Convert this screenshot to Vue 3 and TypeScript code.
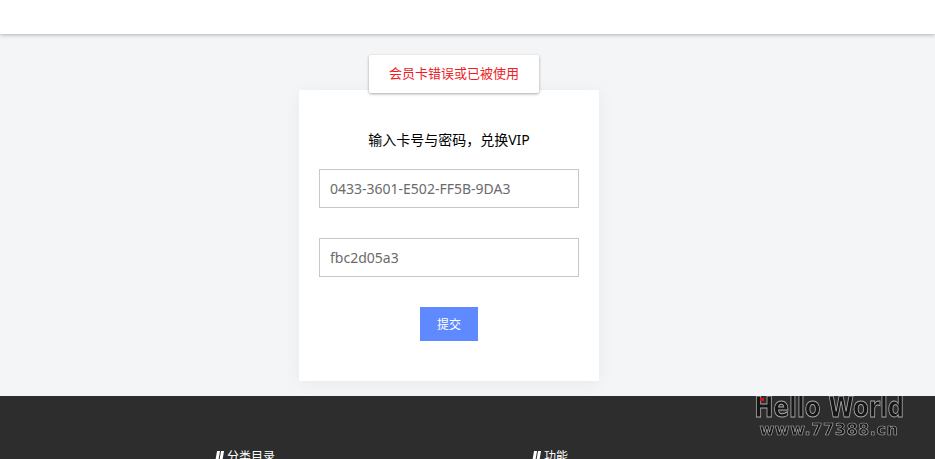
<script setup lang="ts">
const fields: string[] = ['0433-3601-E502-FF5B-9DA3', 'fbc2d05a3']
const columns: { title: string; cls: string }[] = [
  { title: '分类目录', cls: 'col-a' },
  { title: '功能', cls: 'col-b' },
]
</script>

<template>
  <div class="page">
    <header class="topbar"></header>
    <main class="content">
      <div class="toast">会员卡错误或已被使用</div>
      <form class="card" @submit.prevent>
        <h2 class="title">输入卡号与密码，兑换VIP</h2>
        <input v-for="f in fields" :key="f" class="field" type="text" :value="f" />
        <button class="submit" type="submit">提交</button>
      </form>
    </main>
    <footer class="footer">
      <div class="watermark">
        <i class="wm-dot"></i>
        <div class="wm-big">Hello World</div>
        <div class="wm-small">www.77388.cn</div>
      </div>
      <div class="columns">
        <div v-for="c in columns" :key="c.title" :class="['col', c.cls]">
          <span class="slashes"><i></i><i></i></span>
          <span class="col-title">{{ c.title }}</span>
        </div>
      </div>
    </footer>
  </div>
</template>

<style>
html, body { margin: 0; height: 100%; overflow: hidden; background: #f4f5f7; }
</style>

<style scoped>
.page {
  height: 459px;
  overflow: hidden;
  display: flex;
  flex-direction: column;
  font-family: "Noto Sans", "Noto Sans CJK SC", sans-serif;
  background: #f4f5f7;
}
.topbar {
  height: 34px;
  flex: none;
  background: #fff;
  box-shadow: 0 1px 4px rgba(0, 0, 0, 0.28);
  position: relative;
  z-index: 1;
}
.content {
  height: 362px;
  flex: none;
  position: relative;
  padding-top: 56px;
  box-sizing: border-box;
}
.toast {
  position: absolute;
  left: 369px;
  top: 21px;
  width: 170px;
  height: 38px;
  box-sizing: border-box;
  background: #fff;
  border-radius: 2px;
  box-shadow: 0 1px 3px rgba(0, 0, 0, 0.35);
  color: #ee1c25;
  font-size: 13px;
  line-height: 36px;
  text-align: center;
  z-index: 2;
}
.card {
  width: 300px;
  height: 291px;
  margin-left: 299px;
  box-sizing: border-box;
  padding: 39px 20px 0;
  background: #fff;
  box-shadow: 0 2px 16px rgba(0, 0, 0, 0.05);
  display: flex;
  flex-direction: column;
  align-items: center;
}
.title {
  margin: 0 0 18px;
  height: 22px;
  font-size: 14px;
  line-height: 22px;
  font-weight: 400;
  color: #000;
}
.field {
  width: 260px;
  height: 39px;
  flex: none;
  box-sizing: border-box;
  border: 1px solid #c8c8c8;
  border-radius: 0;
  outline: none;
  padding: 0 10px;
  margin-bottom: 30px;
  font-family: inherit;
  font-size: 14px;
  color: #6b6b6b;
  background: #fff;
}
.submit {
  width: 58px;
  height: 34px;
  border: 0;
  padding: 0;
  background: #5f8aff;
  color: #fff;
  font-family: inherit;
  font-size: 12px;
}
.footer {
  flex: 1;
  position: relative;
  overflow: hidden;
  background: #2d2d2d;
}
.watermark {
  position: absolute;
  left: 752px;
  top: -2px;
  width: 154px;
  text-align: center;
  color: #161616;
  font-family: "DejaVu Sans", sans-serif;
  -webkit-text-stroke: 1px #a8a8a8;
  will-change: transform;
}
.wm-dot {
  position: absolute;
  left: 8px;
  top: 4px;
  width: 4px;
  height: 3px;
  background: #e01010;
  z-index: 1;
}
.wm-big {
  width: 200px;
  padding-left: 3px;
  font-size: 29px;
  line-height: 27px;
  font-weight: 700;
  text-align: left;
  white-space: nowrap;
  transform: scaleX(0.79);
  transform-origin: 0 0;
}
.wm-small {
  margin-top: 1px;
  font-size: 16px;
  line-height: 16px;
  font-weight: 700;
  letter-spacing: 0.6px;
  white-space: nowrap;
  -webkit-text-stroke: 0.7px #a0a0a0;
}
.columns {
  display: flex;
  padding: 53px 0 0 216px;
}
.col {
  display: flex;
  align-items: center;
  gap: 4px;
  color: #fff;
  font-size: 12px;
  line-height: 16px;
}
.col-a { width: 317px; }
.slashes {
  display: inline-flex;
  gap: 1px;
  transform: skewX(-10deg);
}
.slashes i {
  display: block;
  width: 3px;
  height: 12px;
  background: #fff;
}
</style>
